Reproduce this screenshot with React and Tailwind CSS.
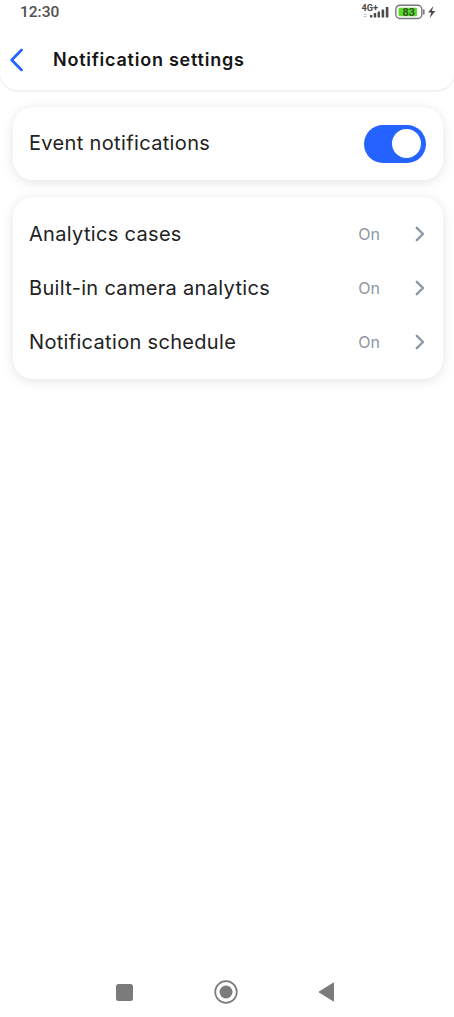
import { useState } from 'react';

const ROWS = [
    { label: 'Analytics cases', value: 'On' },
    { label: 'Built-in camera analytics', value: 'On' },
    { label: 'Notification schedule', value: 'On' },
];

function StatusBar() {
    return (
        <div className="flex h-6 items-center justify-between pl-5 pr-[17px]">
            <span className="font-[Roboto] text-[15.5px] font-medium leading-6 text-[#505050]">12:30</span>
            <svg width="76" height="20" viewBox="0 0 76 20" className="shrink-0">
                <text x="0.5" y="8.8" fontSize="8.8" fontWeight="700" fill="#4b4b4b" fontFamily="Roboto, sans-serif" textLength="16.5" lengthAdjust="spacingAndGlyphs">4G+</text>
                <path d="M3 12.5h3M2.5 14.5h3" stroke="#c4c4c4" strokeWidth="1" />
                <g fill="#4b4b4b">
                    <rect x="9" y="13" width="2.4" height="2.5" rx="0.5" />
                    <rect x="12.8" y="11" width="2.4" height="4.5" rx="0.5" />
                    <rect x="16.6" y="9.5" width="2.4" height="6" rx="0.5" />
                    <rect x="20.6" y="7.5" width="2.6" height="8" rx="0.5" />
                    <rect x="24.8" y="5" width="2.6" height="10.5" rx="0.5" />
                </g>
                <rect x="34.8" y="3.3" width="26" height="13.2" rx="4" fill="#fff" stroke="#777" strokeWidth="1.4" />
                <rect x="37.5" y="5.8" width="18.5" height="8.4" rx="1.2" fill="#5ddb2c" />
                <path d="M62.8 8v4" stroke="#777" strokeWidth="1.6" strokeLinecap="round" />
                <text x="41.6" y="13.6" fontSize="10" fontWeight="700" fill="#2f5a23" fontFamily="Roboto, sans-serif" textLength="12.5" lengthAdjust="spacingAndGlyphs">83</text>
                <path d="M72.2 4.2l-5.2 6.4h3.2l-1.5 5.4 5.7-7h-3.4z" fill="#4b4b4b" />
            </svg>
        </div>
    );
}

function Toggle({ checked, onChange }) {
    return (
        <button
            type="button"
            role="switch"
            aria-checked={checked}
            aria-label="Event notifications"
            onClick={onChange}
            className={`flex h-[38px] w-[62px] items-center rounded-full px-[5px] ${checked ? 'justify-end bg-[#2463ff]' : 'justify-start bg-gray-300'}`}
        >
            <span className="size-[29px] rounded-full bg-white" />
        </button>
    );
}

export default function App() {
    const [enabled, setEnabled] = useState(true);

    return (
        <div className="flex h-screen flex-col bg-white font-[Inter] text-[#222]">
            <header className="h-[90px] shrink-0 rounded-b-[18px] bg-white shadow-[0_1px_3px_rgba(0,0,0,0.1)]">
                <StatusBar />
                <div className="flex h-[71px] items-center pl-2.5">
                    <button type="button" aria-label="Back">
                        <svg width="14" height="24" viewBox="0 0 14 24" fill="none">
                            <path d="M11.5 2L1.7 12l9.8 10" stroke="#2463ff" strokeWidth="2.7" strokeLinecap="round" strokeLinejoin="round" />
                        </svg>
                    </button>
                    <h1 className="ml-[29px] whitespace-nowrap text-lg font-semibold leading-6 tracking-[0.76px] text-[#151515]">Notification settings</h1>
                </div>
            </header>

            <main className="flex grow flex-col gap-[17px] pl-[13px] pr-[11px] pt-[17px]">
                <section className="flex h-[73px] items-center justify-between rounded-[20px] bg-white pl-4 pr-[17px] shadow-[0_2px_12px_rgba(0,0,0,0.11)]">
                    <span className="whitespace-nowrap pb-0.5 text-xl tracking-[0.35px]">Event notifications</span>
                    <Toggle checked={enabled} onChange={() => setEnabled(!enabled)} />
                </section>

                <section className="flex h-[182px] flex-col rounded-[20px] bg-white py-2.5 pl-4 pr-[18px] shadow-[0_2px_12px_rgba(0,0,0,0.11)]">
                    {ROWS.map((row) => (
                        <div key={row.label} className="flex flex-1 items-center">
                            <span className="grow whitespace-nowrap text-xl tracking-[0.32px]">{row.label}</span>
                            <span className="mr-[35px] text-base text-[#8d98a5]">{row.value}</span>
                            <svg width="10" height="16" viewBox="0 0 10 16" fill="none">
                                <path d="M1.8 1.8L8 8l-6.2 6.2" stroke="#8d98a5" strokeWidth="2.4" strokeLinecap="round" strokeLinejoin="round" />
                            </svg>
                        </div>
                    ))}
                </section>
            </main>

            <nav className="flex h-[50px] shrink-0 items-center pl-[116px]">
                <svg width="17" height="17" viewBox="0 0 17 17">
                    <rect width="17" height="17" rx="2.5" fill="#7b7b7b" />
                </svg>
                <svg width="24" height="24" viewBox="0 0 24 24" className="ml-[81px]">
                    <circle cx="12" cy="12" r="10.8" fill="none" stroke="#7b7b7b" strokeWidth="1.7" />
                    <circle cx="12" cy="12" r="6.5" fill="#7b7b7b" />
                </svg>
                <svg width="17" height="20" viewBox="0 0 17 20" className="ml-20">
                    <path d="M15.5 1v18L1 10z" fill="#7b7b7b" stroke="#7b7b7b" strokeWidth="1" strokeLinejoin="round" />
                </svg>
            </nav>
        </div>
    );
}
